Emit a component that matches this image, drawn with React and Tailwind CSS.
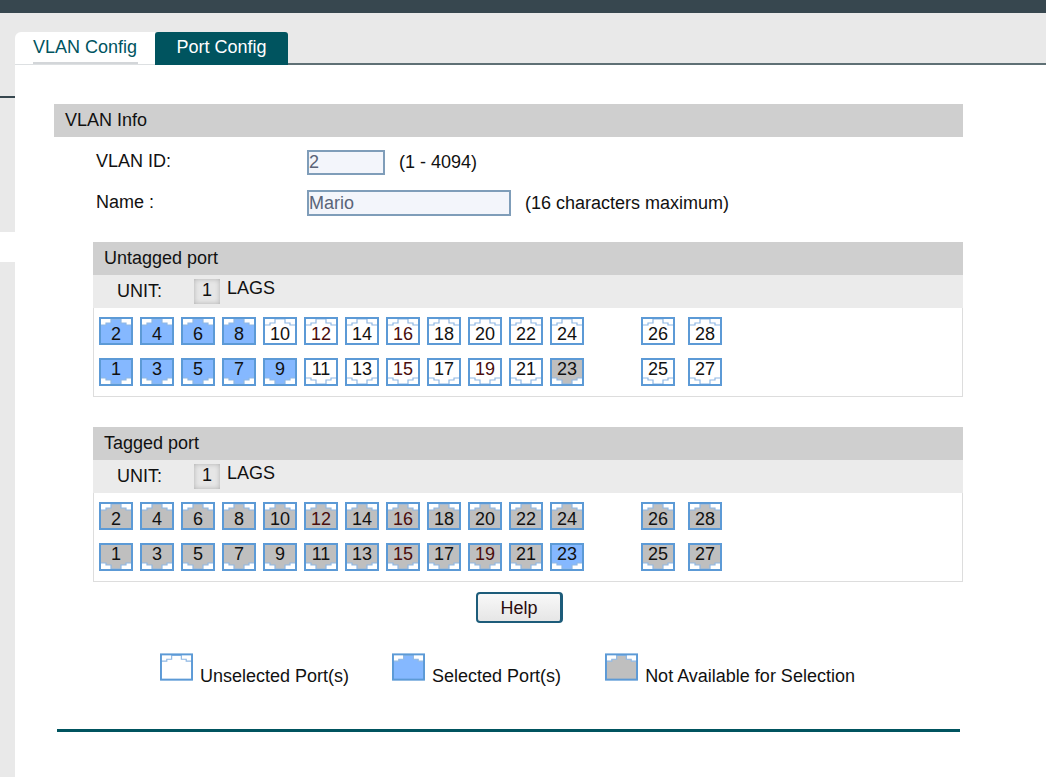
const FONT = { fontFamily: '"Liberation Sans", Arial, sans-serif' }

const upper = [2, 4, 6, 8, 10, 12, 14, 16, 18, 20, 22, 24]
const lower = [1, 3, 5, 7, 9, 11, 13, 15, 17, 19, 21, 23]
const redNums = [12, 16, 15, 19]

const fills = { free: "#ffffff", selected: "#85b8ff", off: "#bfbfbf" }

function PortIcon({ state, flip }) {
  return (
    <svg viewBox="0 0 34 28" className="absolute inset-0 h-full w-full">
      <g transform={flip ? "matrix(1 0 0 -1 0 28)" : undefined}>
        <rect x="1" y="1" width="32" height="26" fill="#ffffff" />
        <path d="M1 8H7V6H12V2H22V6H27V8H33V27H1Z" fill={fills[state]} stroke="#8fb8e4" strokeWidth="1.2" />
        <rect x="1" y="1" width="32" height="26" fill="none" stroke="#5c9ad6" strokeWidth="2" />
      </g>
    </svg>
  )
}

function Port({ num, state, flip }) {
  return (
    <div className="relative flex h-[28px] w-[34px] shrink-0 items-center justify-center">
      <PortIcon state={state} flip={flip} />
      <span className={`relative text-[18px] leading-none ${flip ? "-mt-[7px]" : "mt-[6px]"} ${redNums.includes(num) ? "text-[#4a0d0d]" : "text-[#111111]"}`}>
        {num}
      </span>
    </div>
  )
}

function PortRow({ nums, extra, flip, stateOf }) {
  return (
    <div className="flex">
      <div className="flex gap-[7px]">
        {nums.map((n) => (
          <Port key={n} num={n} flip={flip} state={stateOf(n)} />
        ))}
      </div>
      <div className="ml-[57px] flex gap-[13px]">
        {extra.map((n) => (
          <Port key={n} num={n} flip={flip} state={stateOf(n)} />
        ))}
      </div>
    </div>
  )
}

function PortPanel({ title, stateOf }) {
  return (
    <div className="w-[870px] text-[#111111]">
      <div className="flex h-[33px] items-center bg-[#cfcfcf] pb-[1px] pl-[11px] text-[18px]">{title}</div>
      <div className="flex h-[33px] items-center bg-[#ebebeb] text-[18px]">
        <span className="ml-[24px] w-[77px]">UNIT:</span>
        <span className="flex h-[25px] w-[26px] items-center justify-center bg-[#e6e6e6] pb-[3px] text-[18px] shadow-[inset_0_0_5px_#b0b0b0]">1</span>
        <span className="ml-[7px] -mt-[6px]">LAGS</span>
      </div>
      <div className="flex h-[89px] flex-col gap-[13px] border border-t-0 border-[#dddddd] pl-[5px] pt-[9px]">
        <PortRow nums={upper} extra={[26, 28]} stateOf={stateOf} />
        <PortRow nums={lower} extra={[25, 27]} flip stateOf={stateOf} />
      </div>
    </div>
  )
}

function Legend({ state, label, className }) {
  return (
    <div className={`flex items-end ${className}`}>
      <div className="relative h-[28px] w-[33px]">
        <PortIcon state={state} />
      </div>
      <span className="-mb-[9px] ml-[7px] text-[18px] text-[#111111]">{label}</span>
    </div>
  )
}

const untaggedState = (n) => (n <= 9 ? "selected" : n === 23 ? "off" : "free")
const taggedState = (n) => (n === 23 ? "selected" : "off")

export default function App() {
  return (
    <div className="flex h-[777px] w-[1046px] flex-col overflow-hidden bg-white" style={FONT}>
      <div className="h-[13px] shrink-0 bg-[#37474f]" />
      <div className="flex flex-1">
        {/* left menu stub */}
        <div className="flex w-[15px] shrink-0 flex-col">
          <div className="h-[83px] bg-[#e9e9e9]" />
          <div className="h-[2px] bg-[#37474f]" />
          <div className="h-[134px] bg-[#e9e9e9]" />
          <div className="h-[30px] bg-white" />
          <div className="flex-1 bg-[#e9e9e9]" />
        </div>

        <div className="flex-1">
          <div className="flex h-[52px] items-end border-b-2 border-[#5f7075] bg-[#e9e9e9]">
            <div className="relative -mb-[2px] flex h-[33px] w-[140px] items-center rounded-tl-[6px] border-b border-[#dde0e2] bg-white pb-[2px] pl-[18px] text-[18px] text-[#00545f]">
              VLAN Config
              <div className="absolute bottom-0 left-[18px] h-[2px] w-[105px] bg-[#d3d6d9]" />
            </div>
            <div className="-mb-[2px] flex h-[33px] w-[133px] items-center justify-center rounded-t-[3px] bg-[#00545f] pb-[2px] text-[18px] text-white">
              Port Config
            </div>
          </div>

          <div className="pl-[39px] pt-[39px]">
            <div className="flex h-[33px] w-[909px] items-center bg-[#cfcfcf] pl-[11px] text-[18px] text-[#111111]">
              VLAN Info
            </div>

            <div className="ml-[42px] mt-[13px] flex h-[25px] items-center text-[18px] text-[#111111]">
              <span className="-mt-[3px] w-[211px]">VLAN ID:</span>
              <div className="flex h-[25px] w-[78px] items-center border-2 border-[#7f9db9] bg-[#f3f5fb] pb-[1px] text-[#5a6478]">2</div>
              <span className="ml-[14px]">(1 - 4094)</span>
            </div>
            <div className="ml-[42px] mt-[15px] flex h-[26px] items-center text-[18px] text-[#111111]">
              <span className="-mt-[2px] w-[211px]">Name :</span>
              <div className="flex h-[26px] w-[204px] items-center border-2 border-[#7f9db9] bg-[#f3f5fb] text-[#5a6478]">Mario</div>
              <span className="ml-[14px]">(16 characters maximum)</span>
            </div>

            <div className="ml-[39px] mt-[26px] flex flex-col gap-[30px]">
              <PortPanel title="Untagged port" stateOf={untaggedState} />
              <PortPanel title="Tagged port" stateOf={taggedState} />
            </div>

            <div className="ml-[422px] mt-[10px] flex h-[31px] w-[87px] items-center justify-center rounded-[4px] border-2 border-r-[3px] border-[#1d5c7a] bg-gradient-to-b from-[#f8f8f8] to-[#e6e6e6] pt-[1px] text-[18px] text-[#2a0d0d]">
              Help
            </div>

            <div className="mt-[30px] flex">
              <Legend state="free" label="Unselected Port(s)" className="ml-[106px]" />
              <Legend state="selected" label="Selected Port(s)" className="ml-[43px]" />
              <Legend state="off" label="Not Available for Selection" className="ml-[44px]" />
            </div>

            <div className="ml-[3px] mt-[48px] h-[3px] w-[903px] bg-[#00545f]" />
          </div>
        </div>
      </div>
    </div>
  )
}
